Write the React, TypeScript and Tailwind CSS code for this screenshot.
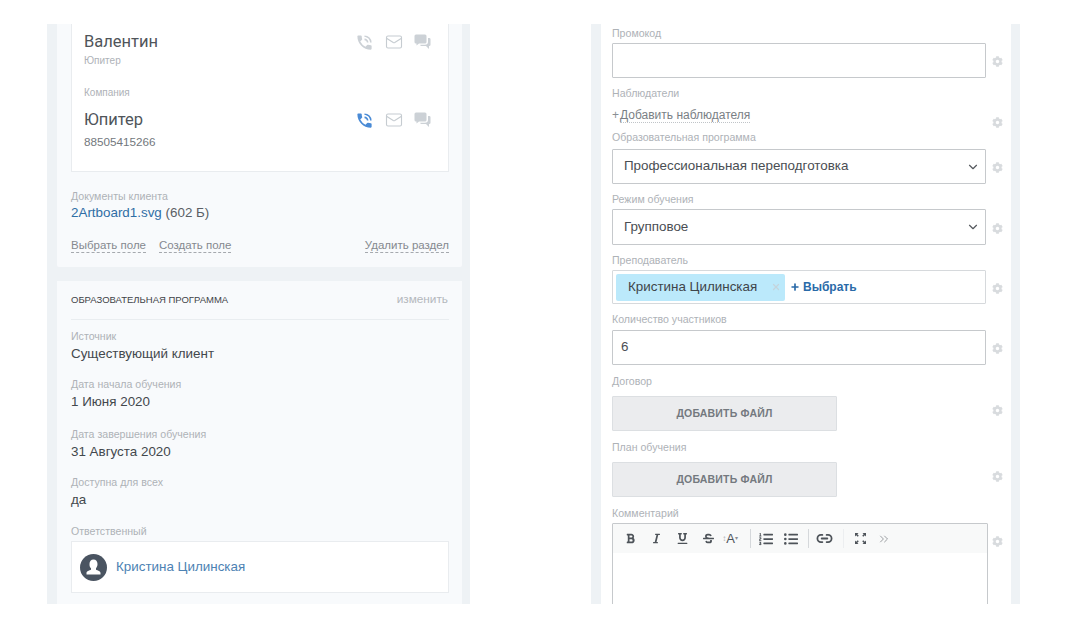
import { ChevronDown, ChevronsRight, Link2, Mail, X, Plus } from 'lucide-react';
import { FaBold, FaItalic, FaListOl, FaListUl, FaStrikethrough, FaUnderline, FaCog } from 'react-icons/fa';
import { MdPhoneInTalk } from 'react-icons/md';
import { ReactNode } from 'react';

function ChatIcon() {
  return (
    <svg width="17" height="16" viewBox="0 0 17 16" fill="#ccd1d6">
      <path d="M2 0.5h9a1.5 1.5 0 0 1 1.5 1.5v6a1.5 1.5 0 0 1-1.5 1.5H5l-2.5 2v-2H2A1.5 1.5 0 0 1 .5 8V2A1.5 1.5 0 0 1 2 .5z" />
      <path d="M14 4h1.2A1.3 1.3 0 0 1 16.500 5.300v5.400a1.300 1.300 0 0 1-1.300 1.300H15v3l-3-3H7.500a1.300 1.300 0 0 1-1.300-1.300H11a3 3 0 0 0 3-3z" />
    </svg>
  );
}

function ContactIcons({ active = false }: { active?: boolean }) {
  return (
    <div className="flex items-center gap-[11px]">
      <MdPhoneInTalk size={19} className={active ? 'text-[#4a8bd6]' : 'text-[#ccd1d6]'} />
      <Mail size={18} strokeWidth={1.5} className="text-[#c6ccd1]" />
      <ChatIcon />
    </div>
  );
}

function Label({ children }: { children: ReactNode }) {
  return <div className="text-[10.6px] leading-[12px] text-[#aeb2b7]">{children}</div>;
}

function InfoRow({ label, value, className }: { label: string; value: string; className: string }) {
  return (
    <div className={className}>
      <Label>{label}</Label>
      <div className="mt-[4px] text-[13.4px] leading-[16px] text-[#43484d]">{value}</div>
    </div>
  );
}

function Field({ label, children, className = '', rowClass = '' }: { label: string; children: ReactNode; className?: string; rowClass?: string }) {
  return (
    <div className={className}>
      <Label>{label}</Label>
      <div className={`flex items-center ${rowClass}`}>
        <div className="w-[374px] shrink-0">{children}</div>
        <FaCog size={11} className="ml-[6px] mt-[2px] text-[#d8dbde]" />
      </div>
    </div>
  );
}

function UploadButton() {
  return (
    <div className="flex h-[35px] w-[225px] items-center justify-center rounded-[1px] border border-[#dcdfe2] bg-[#ebecee] text-[10.500px] font-bold tracking-[0.2px] text-[#74797f]">
      ДОБАВИТЬ ФАЙЛ
    </div>
  );
}

function SelectBox({ value, className }: { value: string; className: string }) {
  return (
    <div className={`flex items-center rounded-[1px] border border-[#c6c9cc] bg-white pl-[11px] pr-[5px] text-[13.4px] text-[#4a4e53] ${className}`}>
      <span className="flex-1">{value}</span>
      <ChevronDown size={14} strokeWidth={2} className="text-[#55595e]" />
    </div>
  );
}

function ToolButton({ children, className = 'w-[26px]' }: { children: ReactNode; className?: string }) {
  return <div className={`flex h-[29px] shrink-0 items-center justify-center text-[#4d5359] ${className}`}>{children}</div>;
}

export default function App() {
  return (
    <div className="flex h-[617px] w-[1071px] overflow-hidden bg-white pb-[13px] pl-[47px] pt-[24px] font-['Liberation_Sans',Arial,sans-serif]">
      {/* left column */}
      <div className="flex w-[423px] shrink-0 flex-col bg-[#eef2f5] pl-[10px] pr-[8px]">
        <div className="h-[243px] rounded-b-[2px] bg-[#f8fafc] pl-[14px] pr-[13px]">
          <div className="h-[148px] border-x border-b border-[#e9ecef] bg-white pl-[12px] pr-[13px]">
            <div className="flex items-center justify-between pr-[4px] pt-[8px]">
              <span className="font-['Roboto',sans-serif] text-[16.500px] leading-[20px] text-[#50555a]">Валентин</span>
              <ContactIcons />
            </div>
            <div className="mt-[3px] text-[10px] leading-[12px] text-[#aeb2b7]">Юпитер</div>
            <div className="mt-[20px] text-[10px] leading-[12px] text-[#aeb2b7]">Компания</div>
            <div className="mt-[11px] flex items-center justify-between pr-[4px]">
              <span className="font-['Roboto',sans-serif] text-[16.500px] leading-[20px] text-[#50555a]">Юпитер</span>
              <ContactIcons active />
            </div>
            <div className="mt-[5px] text-[11.700px] leading-[14px] text-[#73787d]">88505415266</div>
          </div>
          <div className="mt-[18px]">
            <Label>Документы клиента</Label>
          </div>
          <div className="mt-[3px] text-[13.4px] leading-[16px] text-[#5a5f64]">
            <span className="text-[#2f6ea5]">2Artboard1.svg</span> (602 Б)
          </div>
          <div className="mt-[17px] flex justify-between text-[11.500px] leading-[14px] text-[#85898f]">
            <div className="flex gap-[13px]">
              <span className="border-b border-dashed border-[#a5a9ae]">Выбрать поле</span>
              <span className="border-b border-dashed border-[#a5a9ae]">Создать поле</span>
            </div>
            <span className="border-b border-dashed border-[#a5a9ae]">Удалить раздел</span>
          </div>
        </div>

        <div className="mt-[14px] flex-1 bg-[#f8fafc] pl-[14px] pr-[13px]">
          <div className="flex h-[39px] items-center justify-between border-b border-[#e9edf0]">
            <span className="text-[9.500px] text-[#3f4348]">ОБРАЗОВАТЕЛЬНАЯ ПРОГРАММА</span>
            <span className="pr-px text-[11.800px] text-[#b4b8bc]">изменить</span>
          </div>
          <InfoRow className="mt-[10px]" label="Источник" value="Существующий клиент" />
          <InfoRow className="mt-[16px]" label="Дата начала обучения" value="1 Июня 2020" />
          <InfoRow className="mt-[18px]" label="Дата завершения обучения" value="31 Августа 2020" />
          <InfoRow className="mt-[16px]" label="Доступна для всех" value="да" />
          <div className="mt-[17px]">
            <Label>Ответственный</Label>
          </div>
          <div className="mt-[4px] flex h-[52px] items-center gap-[9px] border border-[#e9ecef] bg-white pl-[8px]">
            <svg width="27" height="27" viewBox="0 0 27 27">
              <circle cx="13.500" cy="13.500" r="13.500" fill="#4a5461" />
              <path d="M13.500 5.500c2.500 0 4 2 4 4.500 0 2-.8 3.400-1.500 4.300v1.400c1.500.8 4.500 1.300 4.500 3.300v1.500h-14V19c0-2 3-2.500 4.500-3.300v-1.400C9.800 13.400 9.500 12 9.500 10c0-2.500 1.500-4.500 4-4.500z" fill="#ffffff" />
            </svg>
            <span className="text-[13.4px] text-[#4d82b3]">Кристина Цилинская</span>
          </div>
        </div>
      </div>

      {/* right column */}
      <div className="ml-[121px] w-[429px] shrink-0 overflow-hidden bg-[#eef2f5] pl-[10px] pr-[9px]">
        <div className="h-full overflow-hidden bg-white pl-[11px] pt-[3px]">
          <Field label="Промокод" rowClass="mt-[4px]">
            <div className="h-[35px] rounded-[1px] border border-[#c6c9cc] bg-white" />
          </Field>
          <div className="mt-[9px]">
            <Label>Наблюдатели</Label>
            <div className="flex items-start">
              <div className="mt-[9px] w-[374px] text-[12px] leading-[14px] text-[#7a7f85]">
                <span className="text-[#8a8f94]">+</span>
                <span className="ml-[1px] border-b border-dotted border-[#c0c4c8]">Добавить наблюдателя</span>
              </div>
              <FaCog size={11} className="-mb-[10px] ml-[6px] mt-[18px] text-[#d8dbde]" />
            </div>
          </div>
          <Field label="Образовательная программа" className="mt-[9px]" rowClass="mt-[6px]">
            <SelectBox value="Профессиональная переподготовка" className="h-[35px]" />
          </Field>
          <Field label="Режим обучения" className="mt-[9px]" rowClass="mt-[4px]">
            <SelectBox value="Групповое" className="h-[36px]" />
          </Field>
          <Field label="Преподаватель" className="mt-[9px]" rowClass="mt-[4px]">
            <div className="flex h-[34px] items-center rounded-[1px] border border-[#d6d9dc] bg-white pl-[3px] text-[13.4px]">
              <div className="flex h-[27px] w-[169px] items-center justify-between rounded-[2px] bg-[#bbe9fb] pl-[12px] pr-[4px] text-[#40454a]">
                <span>Кристина Цилинская</span>
                <X size={10} strokeWidth={3} className="text-[#c4d4dc]" />
              </div>
              <Plus size={10} strokeWidth={4} className="ml-[5px] text-[#2a6aa8]" />
              <span className="ml-[3px] text-[12px] font-bold text-[#2a6aa8]">Выбрать</span>
            </div>
          </Field>
          <Field label="Количество участников" className="mt-[9px]" rowClass="mt-[5px]">
            <div className="flex h-[35px] items-center rounded-[1px] border border-[#c6c9cc] bg-white pl-[8px] text-[13.4px] text-[#4a4e53]">
              6
            </div>
          </Field>
          <Field label="Договор" className="mt-[10px]">
            <div className="mt-[9px]">
              <UploadButton />
            </div>
          </Field>
          <Field label="План обучения" className="mt-[10px]">
            <div className="mt-[9px]">
              <UploadButton />
            </div>
          </Field>
          <div className="mt-[10px]">
            <Label>Комментарий</Label>
            <div className="mt-[4px] flex items-start">
              <div className="h-[90px] w-[376px] shrink-0 rounded-t-[1px] border border-[#c6c9cc] bg-white">
                <div className="flex h-[29px] items-center bg-[#f8f9f9] pl-[4px]">
                  <ToolButton><FaBold size={11} /></ToolButton>
                  <ToolButton><FaItalic size={11} /></ToolButton>
                  <ToolButton><FaUnderline size={11} /></ToolButton>
                  <ToolButton><FaStrikethrough size={11} /></ToolButton>
                  <ToolButton className="w-[18px] text-[13px]">
                    <span className="text-[8px] text-[#aab0b5]">↕</span>A<span className="text-[6px] text-[#8a8f94]">▾</span>
                  </ToolButton>
                  <div className="ml-[11px] mr-[2px] h-[19px] w-px bg-[#d5d8db]" />
                  <ToolButton><FaListOl size={14} /></ToolButton>
                  <ToolButton className="w-[24px]"><FaListUl size={14} /></ToolButton>
                  <div className="ml-[5px] h-[19px] w-px bg-[#d5d8db]" />
                  <ToolButton className="w-[30px]"><Link2 size={17} strokeWidth={2.5} /></ToolButton>
                  <div className="ml-[4px] h-[19px] w-px bg-[#eceef0]" />
                  <ToolButton className="w-[32px]">
                    <svg width="13" height="13" viewBox="0 0 13 13" fill="#4d5359">
                      <path d="M1 1h3.500L3.300 2.200 4.800 3.700 3.700 4.800 2.200 3.300 1 4.500zM12 1v3.500L10.800 3.300 9.300 4.800 8.200 3.700 9.700 2.200 8.500 1zM1 12V8.500l1.200 1.200 1.500-1.500 1.100 1.100-1.500 1.500L4.500 12zM12 12H8.500l1.200-1.200-1.500-1.500 1.100-1.100 1.500 1.500L12 8.500z" />
                    </svg>
                  </ToolButton>
                  <ToolButton className="ml-[1px] w-[14px]"><ChevronsRight size={14} strokeWidth={1.3} className="text-[#7d8287]" /></ToolButton>
                </div>
              </div>
              <FaCog size={11} className="ml-[4px] mt-[13px] text-[#d8dbde]" />
            </div>
          </div>
        </div>
      </div>
    </div>
  );
}
